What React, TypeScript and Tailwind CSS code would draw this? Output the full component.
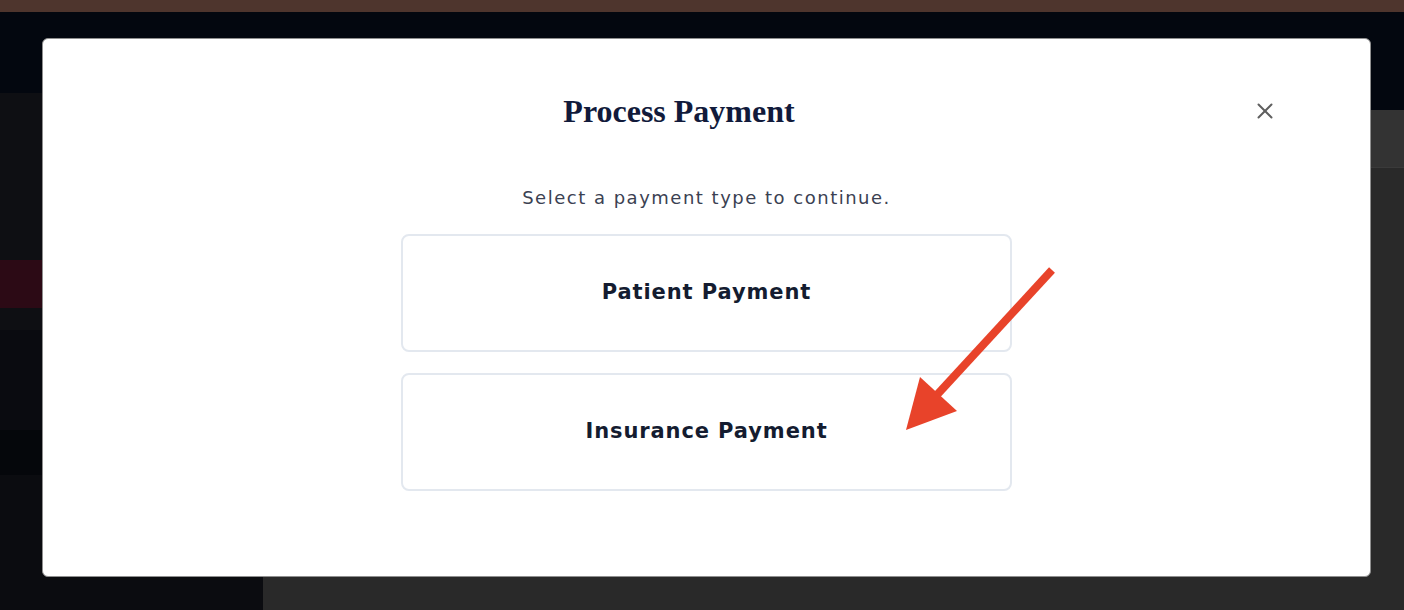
import { X } from 'lucide-react';

const wide = { fontFamily: '"DejaVu Sans", "Open Sans", sans-serif' };

function Sidebar() {
  return (
    <aside className="flex w-[263px] shrink-0 flex-col bg-[#0e0f13]">
      <div className="h-[81px] bg-[#03070f]" />
      <div className="h-[167px] bg-[#0e0f13]" />
      <div className="h-[48px] bg-[#2c0a15]" />
      <div className="h-[22px] bg-[#0e0f13]" />
      <div className="h-[100px] bg-[#0a0b10]" />
      <div className="h-[45px] bg-[#05070b]" />
      <div className="flex-1 bg-[#0b0c10]" />
    </aside>
  );
}

function MainArea() {
  return (
    <main className="flex flex-1 flex-col bg-[#282828]">
      <div className="h-[98px] bg-[#03070f]" />
      <div className="h-[58px] border-b border-[#3a3a3a] bg-[#333333]" />
      <div className="flex-1 bg-[#292929]" />
    </main>
  );
}

function PaymentOption({ label }: { label: string }) {
  return (
    <button
      className="flex h-[118px] w-full items-center justify-center rounded-[8px] border-2 border-[#e3e8ef] bg-white text-[21px] font-bold tracking-[0.9px] text-[#141c30]"
      style={wide}
    >
      {label}
    </button>
  );
}

export default function App() {
  return (
    <div className="relative h-[610px] w-full overflow-hidden bg-[#0b0c10]">
      <div className="h-[12px] bg-[#4e352d]" />
      <div className="flex h-[598px]">
        <Sidebar />
        <MainArea />
      </div>

      {/* modal */}
      <div className="absolute left-[42px] top-[38px] h-[539px] w-[1329px] rounded-[6px] border border-[#8f8f8f] bg-white">
        <div className="flex items-center pl-[70px] pr-[85px] pt-[50px]">
          <h2
            className="flex-1 text-center text-[32px] font-bold leading-[44px] text-[#111a3b]"
            style={{ fontFamily: '"Liberation Serif", "DejaVu Serif", serif' }}
          >
            Process Payment
          </h2>
          <button className="flex h-[40px] w-[40px] items-center justify-center text-[#5f5f5f]">
            <X size={26} strokeWidth={1.8} />
          </button>
        </div>
        <p
          className="mt-[53px] text-center text-[18px] leading-[24px] tracking-[1.5px] text-[#3b4152]"
          style={wide}
        >
          Select a payment type to continue.
        </p>
        <div className="mx-auto mt-[24px] flex w-[611px] flex-col gap-[21px]">
          <PaymentOption label="Patient Payment" />
          <PaymentOption label="Insurance Payment" />
        </div>
      </div>

      {/* annotation arrow */}
      <svg className="pointer-events-none absolute left-0 top-0" width="1404" height="610">
        <line x1="1052" y1="270" x2="935" y2="397" stroke="#e8432a" strokeWidth="8" />
        <polygon points="906,430 920,377 957,411" fill="#e8432a" />
      </svg>
    </div>
  );
}
